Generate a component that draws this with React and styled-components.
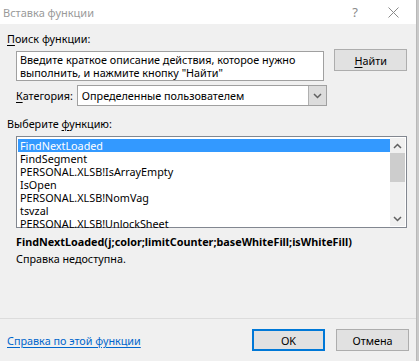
import React from "react";
import styled, { createGlobalStyle } from "styled-components";

const GlobalStyle = createGlobalStyle`
  html, body {
    margin: 0;
    padding: 0;
    background: #d8d8d8;
  }
  body {
    font-family: "Noto Sans", "Open Sans", Arial, sans-serif;
    font-size: 10.8px;
    color: #000;
  }
`;

const Screen = styled.div`
  width: 419px;
  height: 361px;
  display: flex;
  overflow: hidden;
  background: #c9c9c9;
`;

const Dialog = styled.div`
  width: 416px;
  height: 361px;
  display: flex;
  flex-direction: column;
  background: #f0f0f0;
  border-right: 1px solid #b9b9b9;
`;

const TitleBar = styled.div`
  height: 24px;
  flex: none;
  display: flex;
  align-items: center;
  background: #fff;
  padding-left: 3px;
`;

const Title = styled.div`
  flex: 1;
  color: #9a9a9a;
  font-size: 11px;
`;

const TitleButton = styled.div`
  width: ${({ $w }) => $w}px;
  display: flex;
  justify-content: center;
  align-items: center;
  color: #8a8a8a;
  font-size: 13px;
`;

const Body = styled.div`
  flex: 1;
  display: flex;
  flex-direction: column;
  padding: 7px 9px 0 7px;
`;

const Label = styled.div`
  line-height: 15px;
  white-space: nowrap;
  padding-left: ${({ $indent }) => $indent || 0}px;
  margin-top: ${({ $top }) => $top || 0}px;
  u {
    text-decoration: underline;
    text-underline-offset: 2px;
  }
`;

const SearchRow = styled.div`
  display: flex;
  align-items: flex-start;
  margin-top: 5px;
  padding-left: 9px;
`;

const SearchBox = styled.div`
  width: 310px;
  height: 30px;
  box-sizing: border-box;
  background: #fff;
  border: 1px solid #a0a0a0;
  padding: 1px 3px;
  line-height: 13px;
`;

const Button = styled.div`
  width: 73px;
  height: 22px;
  box-sizing: border-box;
  display: flex;
  align-items: center;
  justify-content: center;
  background: #e1e1e1;
  border: ${({ $default }) => ($default ? "2px solid #0078d7" : "1px solid #adadad")};
  margin-left: ${({ $gap }) => $gap || 0}px;
  margin-top: ${({ $top }) => $top || 0}px;
  u {
    text-decoration: underline;
    text-underline-offset: 2px;
  }
`;

const CategoryRow = styled.div`
  display: flex;
  align-items: center;
  margin-top: 4px;
  padding-left: 9px;
  gap: 4px;
`;

const Select = styled.div`
  width: 250px;
  height: 21px;
  box-sizing: border-box;
  background: #fff;
  border: 1px solid #a0a0a0;
  display: flex;
  align-items: center;
`;

const SelectText = styled.div`
  flex: 1;
  padding-left: 4px;
`;

const SelectArrow = styled.div`
  width: 17px;
  height: 19px;
  display: flex;
  align-items: center;
  justify-content: center;
  background: #dcdcdc;
  border-left: 1px solid #b0b0b0;
`;

const ListBox = styled.div`
  width: 391px;
  height: 92px;
  box-sizing: border-box;
  margin: 5px 0 0 9px;
  background: #fff;
  border: 1px solid #828790;
  display: flex;
  padding: 2px 1px 1px 1px;
`;

const Items = styled.div`
  flex: 1;
  display: flex;
  flex-direction: column;
`;

const Item = styled.div`
  height: 13px;
  line-height: 13px;
  padding-left: 2px;
  background: ${({ $selected }) => ($selected ? "#3399ff" : "transparent")};
  color: ${({ $selected }) => ($selected ? "#fff" : "#000")};
  white-space: nowrap;
`;

const ScrollBar = styled.div`
  width: 15px;
  display: flex;
  flex-direction: column;
  align-items: center;
  background: #f0f0f0;
  margin-top: -1px;
`;

const ScrollArrow = styled.div`
  height: 15px;
  display: flex;
  align-items: center;
  justify-content: center;
`;

const Track = styled.div`
  flex: 1;
  width: 15px;
  display: flex;
  flex-direction: column;
`;

const Thumb = styled.div`
  height: 29px;
  width: 15px;
  background: #cdcdcd;
`;

const Signature = styled.div`
  margin-top: 6px;
  padding-left: 9px;
  font-weight: bold;
  line-height: 15px;
`;

const Help = styled.div`
  margin-top: 2px;
  padding-left: 9px;
  line-height: 15px;
`;

const Spacer = styled.div`
  flex: 1;
`;

const Separator = styled.div`
  height: 1px;
  background: #dcdcdc;
  flex: none;
`;

const Footer = styled.div`
  height: 42px;
  flex: none;
  display: flex;
  align-items: center;
  padding: 0 7px 0 7px;
`;

const Link = styled.a`
  color: #0066cc;
  text-decoration: underline;
  text-underline-offset: 2px;
  flex: 1;
  white-space: nowrap;
`;

const Chevron = ({ up }) => (
  <svg width="9" height="6" viewBox="0 0 9 6">
    <path
      d={up ? "M1 5 L4.5 1.5 L8 5" : "M1 1 L4.5 4.5 L8 1"}
      fill="none"
      stroke="#606060"
      strokeWidth="1.5"
    />
  </svg>
);

const functions = [
  "FindNextLoaded",
  "FindSegment",
  "PERSONAL.XLSB!IsArrayEmpty",
  "IsOpen",
  "PERSONAL.XLSB!NomVag",
  "tsvzal",
  "PERSONAL.XLSB!UnlockSheet",
];

export default function App() {
  return (
    <>
      <GlobalStyle />
      <Screen>
        <Dialog>
          <TitleBar>
            <Title>Вставка функции</Title>
            <TitleButton $w={30}>?</TitleButton>
            <TitleButton $w={46}>
              <svg width="11" height="11" viewBox="0 0 11 11">
                <path d="M0.5 0.5 L10.5 10.5 M10.5 0.5 L0.5 10.5" stroke="#8a8a8a" strokeWidth="1" />
              </svg>
            </TitleButton>
          </TitleBar>
          <Body>
            <Label>
              <u>П</u>оиск функции:
            </Label>
            <SearchRow>
              <SearchBox>
                Введите краткое описание действия, которое нужно выполнить, и нажмите кнопку "Найти"
              </SearchBox>
              <Button $gap={10} $top={-2}>
                <u>Н</u>айти
              </Button>
            </SearchRow>
            <CategoryRow>
              <Label>
                <u>К</u>атегория:
              </Label>
              <Select>
                <SelectText>Определенные пользователем</SelectText>
                <SelectArrow>
                  <Chevron />
                </SelectArrow>
              </Select>
            </CategoryRow>
            <Label $top={10}>
              Выберите <u>ф</u>ункцию:
            </Label>
            <ListBox>
              <Items>
                {functions.map((f, i) => (
                  <Item key={f} $selected={i === 0}>
                    {f}
                  </Item>
                ))}
              </Items>
              <ScrollBar>
                <ScrollArrow>
                  <Chevron up />
                </ScrollArrow>
                <Track>
                  <Thumb />
                </Track>
                <ScrollArrow>
                  <Chevron />
                </ScrollArrow>
              </ScrollBar>
            </ListBox>
            <Signature>FindNextLoaded(j;color;limitCounter;baseWhiteFill;isWhiteFill)</Signature>
            <Help>Справка недоступна.</Help>
            <Spacer />
          </Body>
          <Separator />
          <Footer>
            <Link href="#">Справка по этой функции</Link>
            <Button $default>OK</Button>
            <Button $gap={11}>Отмена</Button>
          </Footer>
        </Dialog>
      </Screen>
    </>
  );
}
